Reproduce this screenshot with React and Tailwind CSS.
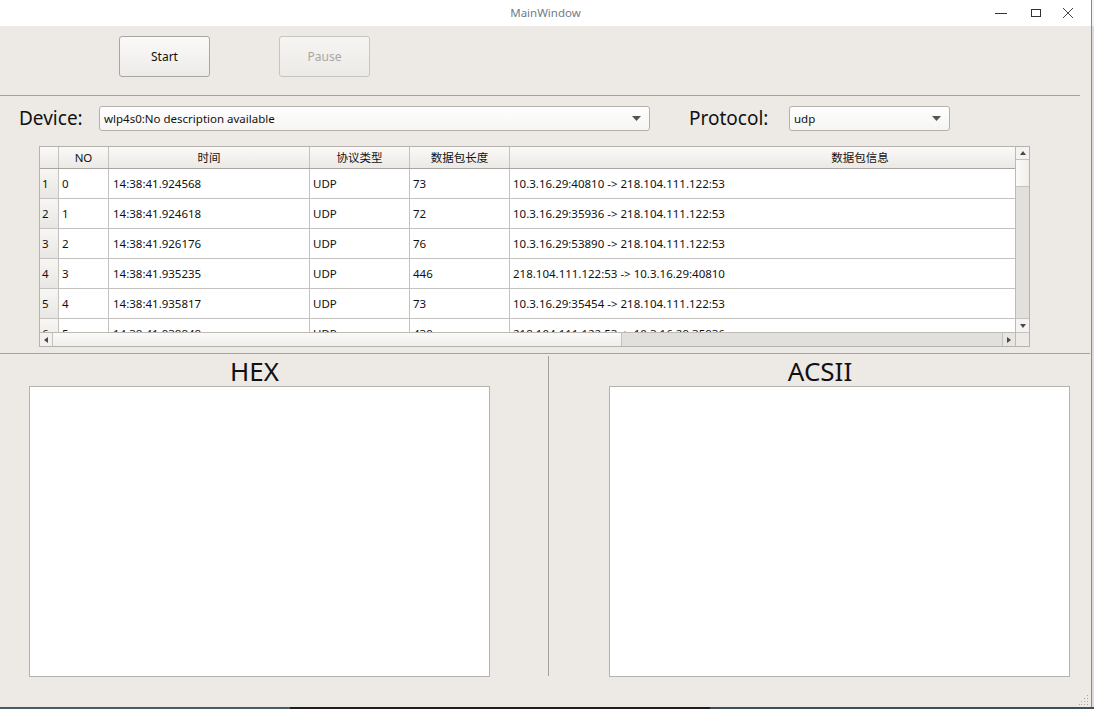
import React from "react";

const rows = [
  ["0", "14:38:41.924568", "UDP", "73", "10.3.16.29:40810 -> 218.104.111.122:53"],
  ["1", "14:38:41.924618", "UDP", "72", "10.3.16.29:35936 -> 218.104.111.122:53"],
  ["2", "14:38:41.926176", "UDP", "76", "10.3.16.29:53890 -> 218.104.111.122:53"],
  ["3", "14:38:41.935235", "UDP", "446", "218.104.111.122:53 -> 10.3.16.29:40810"],
  ["4", "14:38:41.935817", "UDP", "73", "10.3.16.29:35454 -> 218.104.111.122:53"],
  ["5", "14:38:41.938848", "UDP", "439", "218.104.111.122:53 -> 10.3.16.29:35936"],
];

const font = { fontFamily: '"Noto Sans", "Noto Sans CJK SC", sans-serif' };

function Arrow({ dir }) {
  const pts = {
    up: "1,6 4,2 7,6",
    down: "1,2 4,6 7,2",
    left: "6,1 2,4 6,7",
    right: "2,1 6,4 2,7",
  }[dir];
  return (
    <svg width="8" height="8" viewBox="0 0 8 8">
      <polygon points={pts} fill="#4a4a4a" />
    </svg>
  );
}

function Combo({ text, width }) {
  return (
    <div
      className={`${width} h-[25px] flex items-center justify-between rounded-[3px] border border-[#b3b0ab] bg-gradient-to-b from-[#ffffff] to-[#f6f5f3] pl-[4px] pr-[8px] text-[11.5px] text-[#111]`}
    >
      <span className="pt-[1px]">{text}</span>
      <svg width="9" height="5" viewBox="0 0 9 5">
        <polygon points="0,0 9,0 4.5,5" fill="#555" />
      </svg>
    </div>
  );
}

export default function App() {
  return (
    <div className="w-[1094px] h-[709px] flex flex-col bg-white overflow-hidden" style={font}>
      {/* title bar */}
      <div className="h-[26px] flex bg-white">
        <div className="w-[1091px] relative flex items-center justify-center">
          <span className="text-[11.5px] text-[#707b88]">MainWindow</span>
          <div className="absolute right-[8px] top-0 h-[26px] flex items-center">
            <div className="w-[36px] flex justify-center pl-[3px]">
              <svg width="12" height="12" viewBox="0 0 12 12">
                <line x1="0" y1="6.5" x2="12" y2="6.5" stroke="#333" strokeWidth="1" />
              </svg>
            </div>
            <div className="w-[36px] flex justify-center pl-[2px]">
              <svg width="12" height="12" viewBox="0 0 12 12">
                <rect x="1.5" y="2.5" width="9" height="7" fill="none" stroke="#333" strokeWidth="1" />
              </svg>
            </div>
            <div className="w-[30px] flex justify-center">
              <svg width="12" height="12" viewBox="0 0 12 12">
                <line x1="1" y1="1" x2="11" y2="11" stroke="#444" strokeWidth="1" />
                <line x1="11" y1="1" x2="1" y2="11" stroke="#444" strokeWidth="1" />
              </svg>
            </div>
          </div>
        </div>
        <div className="w-px bg-[#8a8a8a]" />
        <div className="flex-1 bg-[#f4f4f4]" />
      </div>

      {/* body */}
      <div className="h-[681px] flex">
        <div className="w-[1091px] bg-[#edeae5] flex flex-col relative">
          {/* buttons */}
          <div className="pt-[10px] pl-[119px] flex gap-[69px]">
            <div className="w-[91px] h-[41px] rounded-[3px] border border-[#a9a6a1] bg-gradient-to-b from-[#fbfaf9] to-[#ecebe8] flex items-center justify-center pt-[1px] text-[12px] text-[#111]">
              Start
            </div>
            <div className="w-[91px] h-[41px] rounded-[3px] border border-[#c8c5c0] bg-gradient-to-b from-[#f6f5f3] to-[#eceae6] flex items-center justify-center pt-[1px] text-[12px] text-[#a9a7a3]">
              Pause
            </div>
          </div>
          <div className="mt-[18px] h-px w-[1080px] bg-[#a3a19d]" />

          {/* device row */}
          <div className="mt-[10px] h-[25px] flex items-center">
            <div className="ml-[19px] w-[80px] text-[19px] text-[#111] leading-none">Device:</div>
            <Combo text="wlp4s0:No description available" width="w-[551px]" />
            <div className="ml-[39px] w-[100px] text-[19px] text-[#111] leading-none">Protocol:</div>
            <Combo text="udp" width="w-[161px]" />
          </div>

          {/* table */}
          <div className="mt-[15px] ml-[39px] w-[991px] h-[201px] border border-[#b6b3ae] bg-white flex text-[11.5px] text-[#111]">
            <div className="w-[975px] flex flex-col">
              <div className="h-[185px] overflow-hidden">
                <div className="w-[1200px]">
                  {/* header */}
                  <div className="h-[22px] flex border-b border-[#a9a6a2] bg-gradient-to-b from-[#fbfaf9] to-[#ebe9e5]">
                    <div className="w-[19px] border-r border-[#c4c2be]" />
                    <div className="w-[50px] border-r border-[#c4c2be] flex items-center justify-center">NO</div>
                    <div className="w-[201px] border-r border-[#c4c2be] flex items-center justify-center">时间</div>
                    <div className="w-[100px] border-r border-[#c4c2be] flex items-center justify-center">协议类型</div>
                    <div className="w-[100px] border-r border-[#c4c2be] flex items-center justify-center">数据包长度</div>
                    <div className="w-[700px] flex items-center justify-center">数据包信息</div>
                  </div>
                  {rows.map((r, i) => (
                    <div key={i} className="h-[30px] flex">
                      <div className="w-[19px] border-r border-b border-[#c4c2be] bg-gradient-to-b from-[#f7f6f4] to-[#e9e7e3] flex items-center pl-[2px] pt-[1px]">
                        {i + 1}
                      </div>
                      <div className="w-[50px] border-r border-b border-[#c4c2be] flex items-center pl-[3px]">{r[0]}</div>
                      <div className="w-[201px] border-r border-b border-[#c4c2be] flex items-center pl-[4px]">{r[1]}</div>
                      <div className="w-[100px] border-r border-b border-[#c4c2be] flex items-center pl-[3px]">{r[2]}</div>
                      <div className="w-[100px] border-r border-b border-[#c4c2be] flex items-center pl-[3px]">{r[3]}</div>
                      <div className="w-[700px] border-b border-[#c4c2be] flex items-center pl-[3px]">{r[4]}</div>
                    </div>
                  ))}
                </div>
              </div>
              {/* horizontal scrollbar */}
              <div className="h-[14px] flex border-t border-[#bdbab6] bg-[#e2e0dc]">
                <div className="w-[13px] border-r border-[#c4c2be] bg-[#f2f1ef] flex items-center justify-center">
                  <Arrow dir="left" />
                </div>
                <div className="w-[569px] border-r border-[#c4c2be] bg-gradient-to-b from-[#fbfaf9] to-[#efeeeb]" />
                <div className="flex-1" />
                <div className="w-[13px] border-l border-[#c4c2be] bg-[#e8e6e3] flex items-center justify-center">
                  <Arrow dir="right" />
                </div>
              </div>
            </div>
            {/* vertical scrollbar */}
            <div className="w-[14px] flex flex-col border-l border-[#bdbab6]">
              <div className="h-[13px] border-b border-[#c4c2be] bg-[#f4f3f1] flex items-center justify-center">
                <Arrow dir="up" />
              </div>
              <div className="h-[27px] border-b border-[#c4c2be] bg-gradient-to-r from-[#fbfaf9] to-[#efeeeb]" />
              <div className="flex-1 bg-[#e2e0dc]" />
              <div className="h-[14px] border-t border-[#c4c2be] bg-[#f4f3f1] flex items-center justify-center">
                <Arrow dir="down" />
              </div>
              <div className="h-[14px] border-t border-[#c4c2be] bg-[#edeae5]" />
            </div>
          </div>

          <div className="mt-[6px] h-px w-[1090px] bg-[#a3a19d]" />

          {/* bottom panels */}
          <div className="flex">
            <div className="w-[548px] pl-[29px] flex flex-col">
              <div className="h-[32px] w-[451px] flex items-end justify-center text-[26px] leading-none text-[#111] pb-[2px]">
                HEX
              </div>
              <div className="w-[461px] h-[291px] border border-[#b5b3af] bg-white" />
            </div>
            <div className="mt-[2px] w-px h-[320px] bg-[#a3a19d]" />
            <div className="pl-[60px] flex flex-col">
              <div className="h-[32px] w-[422px] flex items-end justify-center text-[26px] leading-none text-[#111] pb-[2px]">
                ACSII
              </div>
              <div className="w-[461px] h-[291px] border border-[#b5b3af] bg-white" />
            </div>
          </div>

          {/* resize grip */}
          <div className="absolute right-[2px] bottom-[2px]">
            <svg width="10" height="10" viewBox="0 0 10 10">
              <rect x="8" y="0" width="1" height="1" fill="#a8a6a2" />
              <rect x="5" y="3" width="1" height="1" fill="#a8a6a2" />
              <rect x="8" y="3" width="1" height="1" fill="#a8a6a2" />
              <rect x="2" y="6" width="1" height="1" fill="#a8a6a2" />
              <rect x="5" y="6" width="1" height="1" fill="#a8a6a2" />
              <rect x="8" y="6" width="1" height="1" fill="#a8a6a2" />
              <rect x="0" y="9" width="1" height="1" fill="#a8a6a2" />
              <rect x="2" y="9" width="1" height="1" fill="#a8a6a2" />
              <rect x="5" y="9" width="1" height="1" fill="#a8a6a2" />
              <rect x="8" y="9" width="1" height="1" fill="#a8a6a2" />
            </svg>
          </div>
        </div>
        <div className="w-px bg-[#8a8a8a]" />
        <div className="flex-1 bg-[#dcdcdc]" />
      </div>
      <div className="h-[2px] flex">
        <div className="w-[290px] bg-[#4a5a66]" />
        <div className="w-[420px] bg-[#1e1e1e]" />
        <div className="flex-1 bg-[#3f4f5a]" />
      </div>
    </div>
  );
}
